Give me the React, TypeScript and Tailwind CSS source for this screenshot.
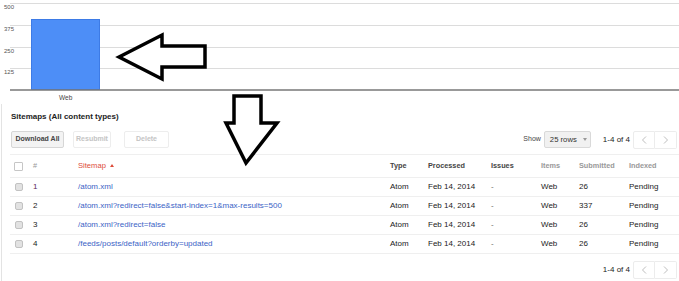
import React from 'react';

type Row = { n: number; url: string; submitted: string };

const rows: Row[] = [
  { n: 1, url: '/atom.xml', submitted: '26' },
  { n: 2, url: '/atom.xml?redirect=false&start-index=1&max-results=500', submitted: '337' },
  { n: 3, url: '/atom.xml?redirect=false', submitted: '26' },
  { n: 4, url: '/feeds/posts/default?orderby=updated', submitted: '26' },
];

const cols = 'grid grid-cols-[23px_45px_312px_38px_63px_50px_38px_50px_1fr] items-center';

/** 상단 막대 차트 */
function Chart() {
  const grid = [
    { y: 3.5, label: '500' },
    { y: 25.5, label: '375' },
    { y: 47.5, label: '250' },
    { y: 68.5, label: '125' },
  ];
  return (
    <svg width={679} height={104} className="block">
      {grid.map((g) => (
        <g key={g.label}>
          <line x1={10} x2={679} y1={g.y} y2={g.y} stroke="#dcdcdc" strokeWidth={1} />
          <text x={4} y={g.y + 5.5} fontSize={6} fill="#555" fontFamily="'Liberation Sans', Arial, sans-serif">
            {g.label}
          </text>
        </g>
      ))}
      <rect x={31.5} y={19.5} width={68} height={70} fill="#4d8ef7" stroke="#3d7be6" strokeWidth={1} />
      <line x1={10} x2={679} y1={90} y2={90} stroke="#777" strokeWidth={1.5} />
      <text x={59} y={100} fontSize={6.5} fill="#444" fontFamily="'Liberation Sans', Arial, sans-serif">
        Web
      </text>
    </svg>
  );
}

function Checkbox({ header }: { header?: boolean }) {
  return header ? (
    <span className="block w-[9px] h-[9px] border border-[#c6c6c6] bg-white rounded-[1px]" />
  ) : (
    <span className="block w-[8px] h-[8px] border border-[#c2c2c2] bg-[#e2e2e2] rounded-[2px]" />
  );
}

function Pager() {
  return (
    <div className="flex items-center">
      <span className="text-[8px] text-[#222] mr-[3px]">1-4 of 4</span>
      <button className="w-[22px] h-[18px] border border-[#ececec] rounded-l-[2px] flex items-center justify-center">
        <svg width="6" height="8" viewBox="0 0 6 8">
          <path d="M5 0.5 L1.5 4 L5 7.5" fill="none" stroke="#bdbdbd" strokeWidth="1" />
        </svg>
      </button>
      <button className="w-[22px] h-[18px] border border-l-0 border-[#ececec] rounded-r-[2px] flex items-center justify-center">
        <svg width="6" height="8" viewBox="0 0 6 8">
          <path d="M1 0.5 L4.5 4 L1 7.5" fill="none" stroke="#bdbdbd" strokeWidth="1" />
        </svg>
      </button>
    </div>
  );
}

export default function App() {
  return (
    <div className="relative w-[679px] h-[281px] overflow-hidden bg-white font-['Liberation_Sans',Arial,sans-serif]">
      <Chart />

      <div className="ml-[1px] border-l border-[#e3e3e3] pl-[8px] h-[177px] pt-[6px]">
        {/* 제목 */}
        <div className="pl-[1px] text-[8px] leading-[14px] font-bold text-[#222]">
          Sitemaps (All content types)
        </div>

        {/* 툴바 */}
        <div className="mt-[7px] flex items-center h-[17px] pr-[2px]">
          <button className="ml-[1px] w-[53px] h-[17px] bg-[#f3f3f3] border border-[#d6d6d6] rounded-[2px] text-[7px] font-bold text-[#444]">
            Download All
          </button>
          <button className="ml-[9px] w-[38px] h-[17px] bg-white border border-[#ededed] rounded-[2px] text-[7px] font-bold text-[#c4c4c4]">
            Resubmit
          </button>
          <button className="ml-[13px] w-[45px] h-[17px] bg-white border border-[#ededed] rounded-[2px] text-[7px] font-bold text-[#c4c4c4]">
            Delete
          </button>
          <div className="ml-auto flex items-center">
            <span className="text-[7px] text-[#444] mr-[3px]">Show</span>
            <div className="w-[47px] h-[17px] bg-[#f1f1f1] border border-[#d9d9d9] rounded-[2px] flex items-center pl-[5px] mr-[12px]">
              <span className="text-[7.7px] text-[#333]">25 rows</span>
              <span className="ml-[6px] w-0 h-0 border-l-[2px] border-r-[2px] border-t-[3px] border-l-transparent border-r-transparent border-t-[#999]" />
            </div>
            <Pager />
          </div>
        </div>

        {/* 테이블 */}
        <div className="mt-[6px]">
          <div className={`${cols} h-[24px] border-t border-b border-[#efefef] text-[7.3px] font-bold`}>
            <div className="pl-[4px]"><Checkbox header /></div>
            <div className="text-[#999] font-normal">#</div>
            <div className="flex items-center text-[#dd4b39] font-normal text-[7.6px]">
              Sitemap
              <span className="ml-[4px] w-0 h-0 border-l-[2.5px] border-r-[2.5px] border-b-[3px] border-l-transparent border-r-transparent border-b-[#dd4b39]" />
            </div>
            <div className="text-[#444]">Type</div>
            <div className="text-[#444]">Processed</div>
            <div className="text-[#444]">Issues</div>
            <div className="text-[#999]">Items</div>
            <div className="text-[#999]">Submitted</div>
            <div className="text-[#999]">Indexed</div>
          </div>
          {rows.map((r) => (
            <div key={r.n} className={`${cols} h-[19px] border-b border-[#efefef] text-[8px] text-[#222]`}>
              <div className="pl-[5px]"><Checkbox /></div>
              <div className={r.n === 1 ? 'text-[#5e2a58]' : 'text-[#222]'}>{r.n}</div>
              <div className="text-[#3b63c6] whitespace-nowrap">{r.url}</div>
              <div>Atom</div>
              <div>Feb 14, 2014</div>
              <div className="text-[#666]">-</div>
              <div>Web</div>
              <div>{r.submitted}</div>
              <div>Pending</div>
            </div>
          ))}
        </div>

        {/* 하단 페이지네이션 */}
        <div className="mt-[7px] flex justify-end pr-[2px]">
          <Pager />
        </div>
      </div>

      {/* 화살표 (주석용 오버레이) */}
      <svg className="absolute left-0 top-0 pointer-events-none" width={679} height={281}>
        <polygon
          points="119,57 162,35 162,46 205,46 205,67 162,67 162,79"
          fill="white"
          stroke="black"
          strokeWidth={3.5}
          strokeLinejoin="miter"
        />
        <polygon
          points="234,96 261,96 261,123 277,123 246,163 226,123 234,123"
          fill="white"
          stroke="black"
          strokeWidth={3.5}
          strokeLinejoin="miter"
        />
      </svg>
    </div>
  );
}
